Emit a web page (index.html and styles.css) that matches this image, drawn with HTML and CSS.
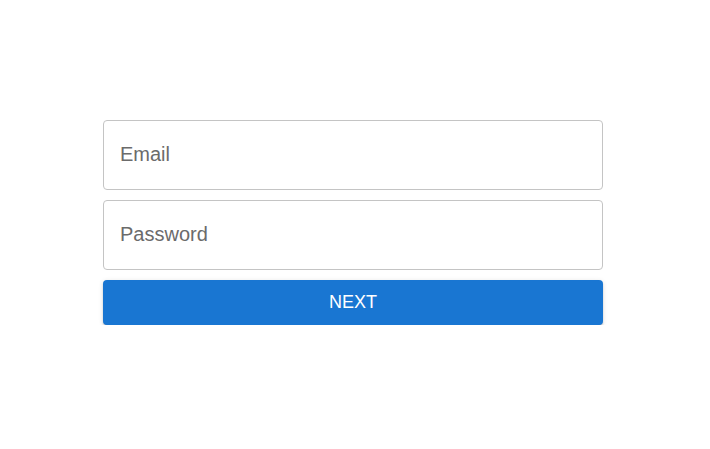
FILE: index.html
```html
<!DOCTYPE html>
<html lang="en">
<head>
    <meta charset="UTF-8">
    <meta name="viewport" content="width=device-width, initial-scale=1.0">
    <title>Login</title>
    <link rel="stylesheet" href="styles.css">
</head>
<body>

<form class="login-form" onsubmit="return false">
    <input type="email" class="field" placeholder="Email">
    <input type="password" class="field" placeholder="Password">
    <button type="submit" class="next-button">NEXT</button>
</form>

</body>
</html>
```

FILE: styles.css
```css
body {
    background-color: #fff;
    font-family: "Liberation Sans", Arial, sans-serif;
    margin: 0;
}
.login-form {
    display: flex;
    flex-direction: column;
    gap: 10px;
    width: 500px;
    margin: 120px 0 0 103px;
}
.field {
    height: 70px;
    box-sizing: border-box;
    padding: 0 16px 2px;
    font-family: inherit;
    font-size: 20px;
    color: #333;
    border: 1px solid #c4c4c4;
    border-radius: 4px;
    outline: none;
}
.field::placeholder {
    color: #6b6b6b;
    opacity: 1;
}
.next-button {
    height: 45px;
    font-family: inherit;
    font-size: 18px;
    color: #fff;
    background-color: #1976d2;
    border: none;
    border-radius: 4px;
    box-shadow: 0 3px 1px -2px rgba(0, 0, 0, 0.2), 0 2px 2px 0 rgba(0, 0, 0, 0.14), 0 1px 5px 0 rgba(0, 0, 0, 0.12);
    cursor: pointer;
}
```
